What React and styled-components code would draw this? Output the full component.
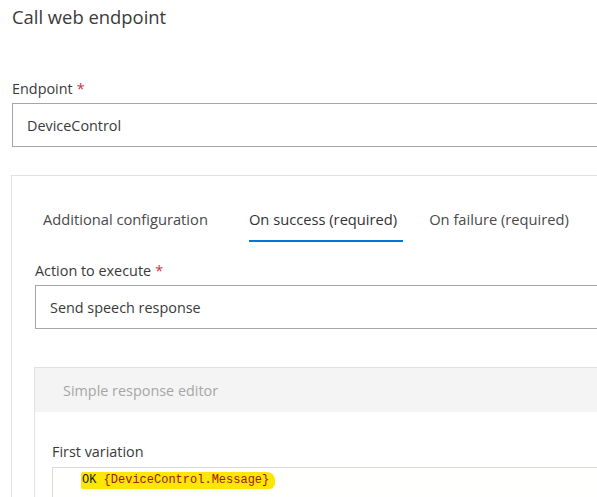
import React from "react";
import styled, { createGlobalStyle } from "styled-components";

const Global = createGlobalStyle`
  html, body { margin: 0; padding: 0; background: #fff; overflow: hidden; }
  body { font-family: "Segoe UI", "Open Sans", "Noto Sans", sans-serif; color: #333; }
`;

const Page = styled.div`
  width: 640px;
  padding: 3px 0 0 11px;
`;

const Title = styled.h1`
  margin: 0 0 0 1px;
  font-size: 18.4px;
  font-weight: 400;
  line-height: 28px;
  color: #3a3a3a;
`;

const Label = styled.label`
  display: block;
  font-size: 14.4px;
  line-height: 20px;
  color: #3a3a3a;
  margin: ${(p) => p.$m || "0"};
`;

const Star = styled.span`
  color: #d13438;
  margin-left: 4px;
`;

const TextBox = styled.div`
  box-sizing: border-box;
  height: 44px;
  border: 1px solid #a6a6a6;
  padding: 0 14px;
  display: flex;
  align-items: center;
  font-size: 14.4px;
  color: #3a3a3a;
  margin: ${(p) => p.$m || "0"};
`;

const Panel = styled.div`
  margin-top: 28px;
  border: 1px solid #e1e1e1;
  border-right: none;
  padding: 25px 0 0 22px;
  height: 340px;
`;

const Tabs = styled.div`
  display: flex;
  padding-left: 9px;
  height: 41px;
`;

const Tab = styled.div`
  position: relative;
  font-size: 14.7px;
  line-height: 37px;
  color: ${(p) => (p.$active ? "#333" : "#4a4a4a")};
  margin-right: ${(p) => p.$mr || "0"};
  padding-right: ${(p) => p.$pr || "0"};
  &::after {
    content: "";
    display: ${(p) => (p.$active ? "block" : "none")};
    position: absolute;
    left: 0;
    right: 0;
    bottom: 0;
    height: 2px;
    background: #0078d4;
  }
`;

const Editor = styled.div`
  margin-top: 38px;
  border: 1px solid #e1e1e1;
  border-right: none;
  height: 200px;
`;

const EditorHeader = styled.div`
  background: #f4f4f4;
  height: 44px;
  display: flex;
  align-items: center;
  padding-left: 28px;
  font-size: 14.4px;
  color: #a6a6a6;
`;

const EditorBody = styled.div`
  padding: 30px 0 0 17px;
`;

const CodeBox = styled.div`
  margin-top: 5px;
  border-top: 1px solid #dcdce0;
  border-left: 1px solid #dcdce0;
  background: #fffffd;
  height: 40px;
  padding: 3px 0 0 28px;
  font-family: "Liberation Mono", "DejaVu Sans Mono", monospace;
  font-size: 12px;
  line-height: 18px;
`;

const Highlight = styled.span`
  background: #fbe700;
  padding: 1px 6px 2px 1px;
  border-radius: 2px 8px 6px 2px;
`;

const Keyword = styled.span`
  color: #1a1a1a;
`;

const Token = styled.span`
  color: #a31515;
`;

export default function App() {
  return (
    <Page>
      <Global />
      <Title>Call web endpoint</Title>
      <Label $m="48px 0 0 1px">
        Endpoint<Star>*</Star>
      </Label>
      <TextBox $m="4px 0 0 1px">DeviceControl</TextBox>
      <Panel>
        <Tabs>
          <Tab $mr="41px">Additional configuration</Tab>
          <Tab $active $pr="6px" $mr="26px">On success (required)</Tab>
          <Tab>On failure (required)</Tab>
        </Tabs>
        <Label $m="19px 0 0 1px">
          Action to execute<Star>*</Star>
        </Label>
        <TextBox $m="4px 0 0 1px">Send speech response</TextBox>
        <Editor>
          <EditorHeader>Simple response editor</EditorHeader>
          <EditorBody>
            <Label>First variation</Label>
            <CodeBox>
              <Highlight>
                <Keyword>OK</Keyword> <Token>{"{DeviceControl.Message}"}</Token>
              </Highlight>
            </CodeBox>
          </EditorBody>
        </Editor>
      </Panel>
    </Page>
  );
}
